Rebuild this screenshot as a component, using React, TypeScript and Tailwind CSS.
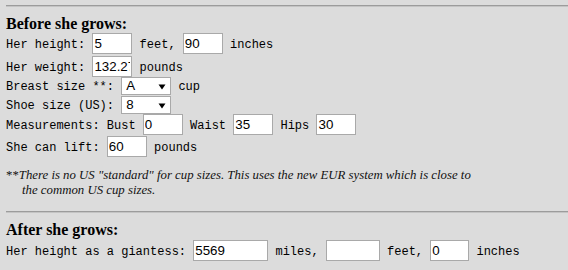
import React from "react";

const mono = { fontFamily: '"Liberation Mono", monospace' };

function Box({ value, w }: { value: string; w: string }) {
    return (
        <input
            readOnly
            value={value}
            className={`${w} h-[21px] align-baseline bg-white border border-[#a9a9a9] px-[1px] text-[13.33px] text-black outline-none font-['Liberation_Sans',sans-serif]`}
        />
    );
}

function Pick({ value }: { value: string }) {
    return (
        <span className="relative inline-block align-baseline w-[50px] h-[18px] bg-white border border-[#a9a9a9] font-['Liberation_Sans',sans-serif] text-[13.33px] leading-[16px] pl-[4px] text-black">
            {value}
            <svg className="absolute right-[4px] top-[6px]" width="8" height="6" viewBox="0 0 8 6">
                <path d="M0.5 0.5 L7.5 0.5 L4 5.5 Z" fill="#000" />
            </svg>
        </span>
    );
}

function Rule() {
    return (
        <div className="ml-[6px]">
            <div className="h-[1px] bg-[#9c9c9c]" />
            <div className="h-[1px] bg-[#c4c4c4]" />
        </div>
    );
}

export default function App() {
    return (
        <div className="w-[568px] h-[270px] bg-[#dcdcdc] overflow-hidden pt-[5px] text-black">
            <Rule />
            <div className="pl-[6px]">
                <h2 className="mt-[8px] h-[18px] leading-[18px] text-[16px] font-bold font-['Liberation_Serif',serif]">Before she grows:</h2>

                <div style={mono} className="text-[12px] whitespace-pre">
                    <div className="h-[23px]">Her height: <Box value="5" w="w-[40px]" /> feet, <Box value="90" w="w-[40px]" /> inches</div>
                    <div className="h-[21px]">Her weight: <Box value="132.27" w="w-[40px]" /> pounds</div>
                    <div className="h-[19px]">Breast size **: <Pick value="A" /> cup</div>
                    <div className="h-[18px]">Shoe size (US): <Pick value="8" /></div>
                    <div className="h-[22px]">Measurements: Bust <Box value="0" w="w-[40px]" /> Waist <Box value="35" w="w-[40px]" /> Hips <Box value="30" w="w-[40px]" /></div>
                    <div className="h-[21px]">She can lift: <Box value="60" w="w-[40px]" /> pounds</div>
                </div>

                <p className="mt-[11px] pl-[16px] [text-indent:-16px] text-[12.8px] leading-[15px] font-['Liberation_Serif',serif] text-[#111]">
                    **<i>There is no US "standard" for cup sizes. This uses the new EUR system which is close to<br />the common US cup sizes.</i>
                </p>
            </div>

            <div className="mt-[13px]">
                <Rule />
            </div>

            <div className="pl-[6px]">
                <h2 className="mt-[8px] h-[18px] leading-[18px] text-[16px] font-bold font-['Liberation_Serif',serif]">After she grows:</h2>
                <div style={mono} className="mt-[1px] text-[12px] whitespace-pre">
                    <div className="h-[21px]">Her height as a giantess: <Box value="5569" w="w-[75px]" /> miles, <Box value="" w="w-[54px]" /> feet, <Box value="0" w="w-[39px]" /> inches</div>
                </div>
            </div>
        </div>
    );
}
